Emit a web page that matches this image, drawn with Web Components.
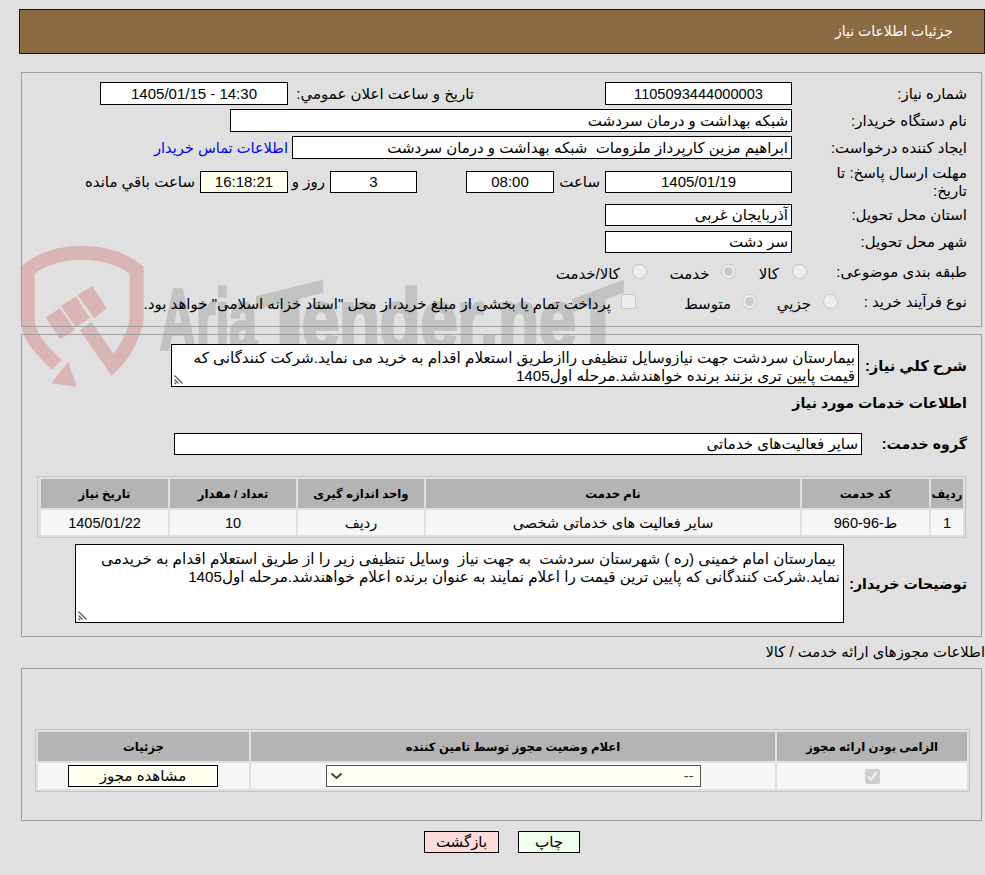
<!DOCTYPE html>
<html lang="fa" dir="rtl">
<head>
<meta charset="utf-8">
<title>جزئیات اطلاعات نیاز</title>
<style>
html{margin:0;padding:0;background:#e0e0e0;overflow:hidden}
body{margin:0;padding:0;font:15px "Liberation Sans","DejaVu Sans",sans-serif;color:#000;direction:rtl;height:875px}
</style>
</head>
<body>
<x-watermark></x-watermark>
<x-header>جزئیات اطلاعات نیاز</x-header>

<x-panel style="margin-top:18px;padding:9px 14px 12px 0">
  <x-row style="--label:175px;height:23px;margin-bottom:4px">
    <span slot="label">شماره نیاز:</span>
    <x-box style="width:187px;font-size:14.6px">1105093444000003</x-box>
    <span style="width:186px;margin-right:131px">تاریخ و ساعت اعلان عمومي:</span>
    <x-box style="width:188px">14:30 - 1405/01/15</x-box>
  </x-row>
  <x-row style="--label:175px;height:23px;margin-bottom:4px">
    <span slot="label">نام دستگاه خریدار:</span>
    <x-box start style="width:562px">شبکه بهداشت و درمان سردشت</x-box>
  </x-row>
  <x-row style="--label:175px;height:23px;margin-bottom:4px">
    <span slot="label">ایجاد کننده درخواست:</span>
    <x-box start style="width:500px">ابراهیم مزین کارپرداز ملزومات&nbsp; شبکه بهداشت و درمان سردشت</x-box>
    <span style="margin-right:4px;color:#0000ff;font-size:14.6px">اطلاعات تماس خریدار</span>
  </x-row>
  <x-row style="--label:175px;height:37px;margin-bottom:4px">
    <span slot="label" style="display:block;width:145px;line-height:18px">مهلت ارسال پاسخ: تا تاریخ:</span>
    <x-box style="width:187px;height:22px">1405/01/19</x-box>
    <span style="width:46px;padding-right:5px">ساعت</span>
    <x-box style="width:88px;height:22px">08:00</x-box>
    <x-box style="width:87px;height:22px;margin-right:49px">3</x-box>
    <span style="width:37px;padding-right:5px">روز و</span>
    <x-box style="width:88px;height:22px;background:#ffffee">16:18:21</x-box>
    <span style="padding-right:5px">ساعت باقي مانده</span>
  </x-row>
  <x-row style="--label:175px;height:22px;margin-bottom:5px">
    <span slot="label">استان محل تحویل:</span>
    <x-box start style="width:187px">آذربایجان غربی</x-box>
  </x-row>
  <x-row style="--label:175px;height:22px;margin-bottom:7px">
    <span slot="label">شهر محل تحویل:</span>
    <x-box start style="width:187px">سر دشت</x-box>
  </x-row>
  <x-row style="--label:160px;height:24px;margin-bottom:6px">
    <span slot="label">طبقه بندی موضوعی:</span>
    <x-option type="radio" style="width:71.5px;--gap:13px">کالا</x-option>
    <x-option type="radio" checked style="width:88.5px;--gap:11px">خدمت</x-option>
    <x-option type="radio" style="--gap:12px">کالا/خدمت</x-option>
  </x-row>
  <x-row style="--label:129px;height:24px">
    <span slot="label">نوع فرآیند خرید :</span>
    <x-option type="radio" style="width:81px;--gap:12px">جزیي</x-option>
    <x-option type="radio" checked style="width:121px;--gap:11px">متوسط</x-option>
    <x-option type="checkbox" style="--gap:10px">پرداخت تمام یا بخشی از مبلغ خرید،از محل "اسناد خزانه اسلامی" خواهد بود.</x-option>
  </x-row>
</x-panel>

<x-panel style="margin-top:7px;padding:9px 14px 13px 0">
  <x-row strong style="--label:108px;height:43px;margin-bottom:5px">
    <span slot="label" style="font-size:14.7px">شرح کلي نیاز:</span>
    <x-area style="width:688px;height:43px">بیمارستان سردشت جهت نیازوسایل تنظیفی راازطریق استعلام اقدام به خرید می نماید.شرکت کنندگانی که قیمت پایین تری بزنند برنده خواهندشد.مرحله اول1405</x-area>
  </x-row>
  <x-row strong style="--label:auto;height:22px;margin-bottom:19px">
    <span slot="label">اطلاعات خدمات مورد نیاز</span>
  </x-row>
  <x-row strong style="--label:105px;height:22px;margin-bottom:21px">
    <span slot="label">گروه خدمت:</span>
    <x-box start style="width:688px">سایر فعالیت‌های خدماتی</x-box>
  </x-row>
  <x-table style="--cols:32px 127px 374px 126px 126px 127px;--rows:29px 25px;margin-left:15px;margin-right:1px;margin-bottom:6px">
    <x-cell head>ردیف</x-cell><x-cell head>کد خدمت</x-cell><x-cell head>نام خدمت</x-cell><x-cell head>واحد اندازه گیری</x-cell><x-cell head>تعداد / مقدار</x-cell><x-cell head>تاریخ نیاز</x-cell>
    <x-cell>1</x-cell><x-cell>ط-96-960</x-cell><x-cell>سایر فعالیت های خدماتی شخصی</x-cell><x-cell>ردیف</x-cell><x-cell>10</x-cell><x-cell>1405/01/22</x-cell>
  </x-table>
  <x-row strong style="--label:123px;height:79px">
    <span slot="label">توضیحات خریدار:</span>
    <x-area style="width:769px;height:79px;padding-top:5px">&nbsp;بیمارستان امام خمینی (ره ) شهرستان سردشت&nbsp; به جهت نیاز&nbsp; وسایل تنظیفی زیر را از طریق استعلام اقدام به خریدمی نماید.شرکت کنندگانی که پایین ترین قیمت را اعلام نمایند به عنوان برنده اعلام خواهندشد.مرحله اول1405</x-area>
  </x-row>
</x-panel>

<x-section-title>اطلاعات مجوزهای ارائه خدمت / کالا</x-section-title>

<x-panel style="padding:60px 11px 28px 13px">
  <x-table style="--cols:190px 524px 211px;--rows:29px 26px">
    <x-cell head>الزامی بودن ارائه مجوز</x-cell><x-cell head>اعلام وضعیت مجوز توسط تامین کننده</x-cell><x-cell head>جزئیات</x-cell>
    <x-cell><input type="checkbox" checked disabled style="width:15px;height:15px;margin:0"></x-cell>
    <x-cell><x-select style="width:375px">--</x-select></x-cell>
    <x-cell><x-btn style="width:150px;height:22px;margin-right:1px;background:#ffffee">مشاهده مجوز</x-btn></x-cell>
  </x-table>
</x-panel>

<x-actions>
  <x-btn style="width:62px;height:22px;background:#eeffee">چاپ</x-btn>
  <x-btn style="width:75px;height:22px;background:#ffdddd">بازگشت</x-btn>
</x-actions>

<script>
function def(name, css, html){
  customElements.define(name, class extends HTMLElement{
    constructor(){
      super();
      this.attachShadow({mode:'open'}).innerHTML = '<style>'+css+'</style>'+(html||'<slot></slot>');
    }
  });
}
def('x-header',
  ':host{display:block;box-sizing:border-box;height:45px;margin:9px 0 0 19px;width:966px;padding-right:31px;background:#8b6b42;border:1px solid #1e1408;color:#fff;font-size:14px;line-height:43px}');
def('x-panel',
  ':host{display:block;margin:0 3px 0 21px;border:1px solid #a0a0a0;box-sizing:content-box}');
def('x-row',
  ':host{display:flex;align-items:center;direction:rtl}'+
  '.l{flex:0 0 var(--label);display:block}'+
  ':host([strong]) .l{font-weight:bold;font-size:14.2px}',
  '<div class="l"><slot name="label"></slot></div><slot></slot>');
def('x-box',
  ':host{display:flex;flex:none;box-sizing:border-box;height:100%;align-items:center;justify-content:center;padding:0 3px;background:#fff;border:1px solid #000;white-space:nowrap;overflow:hidden}'+
  ':host([start]){justify-content:flex-start}');
def('x-area',
  ':host{display:block;flex:none;position:relative;box-sizing:border-box;padding:4px 3px 0;font-size:15.2px;line-height:18px;background:#fff;border:1px solid #000;overflow:hidden}'+
  'svg{position:absolute;left:1px;bottom:1px}',
  '<slot></slot><svg width="11" height="11" viewBox="0 0 11 11" fill="none" stroke="#555" stroke-width="1.2"><path d="M1.5 1.5 L9.5 9.5 M1.5 5.5 L5.5 9.5 M1.5 8.5 L3 10"/></svg>');
customElements.define('x-option', class extends HTMLElement{
  constructor(){
    super();
    const t=this.getAttribute('type'), c=this.hasAttribute('checked')?' checked':'';
    this.attachShadow({mode:'open'}).innerHTML =
      '<style>:host{display:flex;flex:none;align-items:center;gap:var(--gap);white-space:nowrap}'+
      'input{width:15px;height:15px;margin:0;flex:none;position:relative;top:-1px}span{padding-top:3px}</style>'+
      '<input type="'+t+'" disabled'+c+'><span><slot></slot></span>';
  }
});
def('x-table',
  ':host{display:grid;grid-template-columns:var(--cols);grid-template-rows:var(--rows);gap:2px;padding:2px;border:1px solid #c4c4c4}');
def('x-cell',
  ':host{display:flex;align-items:center;justify-content:center;background:#f6f6f6;white-space:nowrap;overflow:hidden;font-size:14.5px}'+
  ':host([head]){background:#b4b4b4;font-weight:bold;font-size:11.7px}');
def('x-select',
  ':host{display:flex;align-items:center;justify-content:space-between;box-sizing:border-box;height:22px;padding:0 6px 0 3px;background:#fefff3;border:1px solid #555;color:#444}',
  '<slot></slot><svg width="13" height="8" viewBox="0 0 13 8" fill="none" stroke="#444" stroke-width="2"><path d="M1.5 1.5 L6.5 6 L11.5 1.5"/></svg>');
def('x-btn',
  ':host{display:flex;align-items:center;justify-content:center;box-sizing:border-box;border:1px solid #000;flex:none;font-size:15px}');
def('x-section-title',
  ':host{display:block;height:23px;line-height:15px;margin-top:8px;white-space:nowrap;font-size:14.8px}');
def('x-actions',
  ':host{display:flex;gap:19px;margin:10px 405px 0 0}');
def('x-watermark',
  ':host{position:absolute;left:0;top:0;z-index:-1;width:985px;height:400px;overflow:hidden;display:block;direction:ltr}'+
  'svg{position:absolute;left:15px;top:240px}'+
  '.t{position:absolute;left:0;top:269px;font:bold 86px/100px "Liberation Sans",sans-serif;color:#c2c2c2;-webkit-text-stroke:3.5px #c2c2c2;white-space:nowrap}'+
  '.t span{position:absolute;top:0;transform-origin:0 50%}',
  '<svg width="300" height="160" viewBox="0 0 900 480"><g fill="#d9b5b5">'+
  '<path d="M125 375 C70 320 38 290 38 230 L38 90 C90 50 150 38 200 38 C260 38 320 55 365 90 L365 235 C360 280 330 340 293 375 L212 258" fill="none" stroke="#d9b5b5" stroke-width="42"/>'+
  '<polygon points="160,365 185,440 108,430"/>'+
  '<polygon points="92,232 135,205 180,270 135,298"/>'+
  '<polygon points="138,197 183,170 225,235 182,262"/>'+
  '<polygon points="188,165 232,138 275,205 238,235"/>'+
  '</g></svg>'+
  '<div class="t"><span style="left:160px;transform:scaleX(.58)">Aria</span>'+
  '<span style="left:257px;top:8px;transform:scaleX(1.24) skewY(-17deg)">T</span>'+
  '<span style="left:302px;transform:scaleX(.775)">ender.ne</span>'+
  '<span style="left:573px;top:11px;transform:scaleX(.95) skewY(-20deg)">T</span></div>');
</script>
</body>
</html>
